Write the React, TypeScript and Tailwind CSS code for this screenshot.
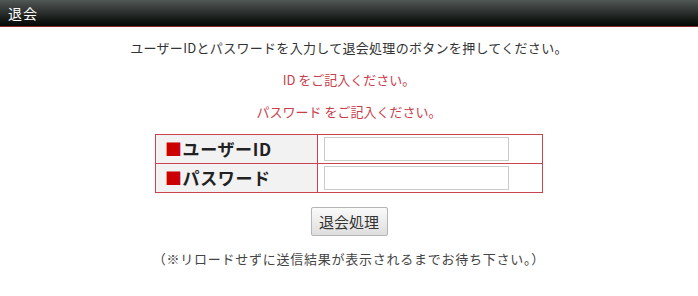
import { useState } from 'react';

const FONT = { fontFamily: '"Noto Sans CJK JP", "Liberation Sans", sans-serif' };

export default function App() {
  const [userId, setUserId] = useState('');
  const [password, setPassword] = useState('');

  return (
    <div className="w-[698px] h-[296px] bg-white text-[#333]" style={FONT}>
      <div className="h-[27px] border-b border-[#8a2a33] bg-gradient-to-b from-[#525856] via-[#2a2e2c] to-[#050805] px-[8px] flex items-center">
        <h1 className="text-white text-[14px] leading-none tracking-[1px]">退会</h1>
      </div>

      <div className="flex flex-col items-center">
        <p className="mt-[12px] text-[13px] leading-[18px] tracking-[0.3px]">
          ユーザーIDとパスワードを入力して退会処理のボタンを押してください。
        </p>
        <p className="mt-[14px] text-[13px] leading-[18px] text-[#c8404c]">ID をご記入ください。</p>
        <p className="mt-[14px] text-[13px] leading-[18px] text-[#c8404c]">パスワード をご記入ください。</p>

        <table className="mt-[13px] w-[388px] border-collapse border border-[#c84450]">
          <tbody>
            <tr className="h-[29px]">
              <th className="w-[162px] bg-[#f2f2f2] border border-[#c84450] text-left pl-[9px] text-[17px] tracking-[0.6px] font-bold text-[#222]">
                <span className="text-[#cc0000]">■</span>ユーザーID
              </th>
              <td className="border border-[#c84450] pl-[6px]">
                <input
                  value={userId}
                  onChange={(e) => setUserId(e.target.value)}
                  className="block w-[185px] h-[24px] border border-[#c9cdc9] bg-white outline-none px-1 text-[13px]"
                />
              </td>
            </tr>
            <tr className="h-[29px]">
              <th className="bg-[#f2f2f2] border border-[#c84450] text-left pl-[9px] text-[17px] tracking-[0.6px] font-bold text-[#222]">
                <span className="text-[#cc0000]">■</span>パスワード
              </th>
              <td className="border border-[#c84450] pl-[6px]">
                <input
                  type="password"
                  value={password}
                  onChange={(e) => setPassword(e.target.value)}
                  className="block w-[185px] h-[24px] border border-[#c9cdc9] bg-white outline-none px-1 text-[13px]"
                />
              </td>
            </tr>
          </tbody>
        </table>

        <button className="mt-[14px] w-[77px] h-[29px] border border-[#b5b5b5] rounded-[2px] bg-gradient-to-b from-[#fafafa] to-[#dedede] text-[15px] text-[#333] leading-none">
          退会処理
        </button>

        <p className="mt-[14px] text-[13px] leading-[18px] tracking-[0.75px] text-[#444]">
          （※リロードせずに送信結果が表示されるまでお待ち下さい。）
        </p>
      </div>
    </div>
  );
}
